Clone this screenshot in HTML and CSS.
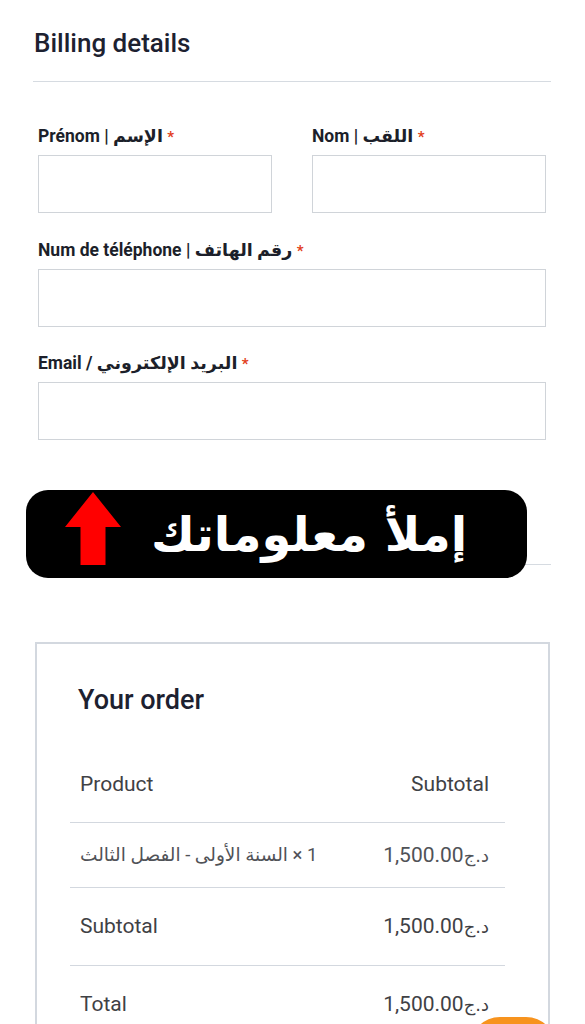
FILE: index.html
```html
<!DOCTYPE html>
<html lang="fr">
  <head>
    <meta charset="UTF-8" />
    <meta name="viewport" content="width=device-width, initial-scale=1.0" />
    <title>Checkout</title>
    <link rel="stylesheet" href="styles.css">
  </head>
  <body>
    <div class="page">
      <h2 class="title">Billing details</h2>
      <hr class="rule" />

      <div class="row two">
        <div class="field">
          <label>Prénom | الإسم <span class="req">*</span></label>
          <input type="text" />
        </div>
        <div class="field">
          <label>Nom | اللقب <span class="req">*</span></label>
          <input type="text" />
        </div>
      </div>
      <div class="field">
        <label>Num de téléphone | رقم الهاتف <span class="req">*</span></label>
        <input type="tel" />
      </div>
      <div class="field">
        <label>Email / البريد الإلكتروني <span class="req">*</span></label>
        <input type="email" />
      </div>

      <hr class="rule lower" />

      <div class="order">
        <h3>Your order</h3>
        <table class="order_table">
          <tr class="head">
            <td>Product</td>
            <td class="num">Subtotal</td>
          </tr>
          <tr class="item">
            <td><span dir="rtl">السنة الأولى - الفصل الثالث</span> × 1</td>
            <td class="num">1,500.00<span class="cur">د.ج</span></td>
          </tr>
          <tr class="sub">
            <td>Subtotal</td>
            <td class="num">1,500.00<span class="cur">د.ج</span></td>
          </tr>
          <tr class="total">
            <td>Total</td>
            <td class="num">1,500.00<span class="cur">د.ج</span></td>
          </tr>
        </table>
      </div>
    </div>

    <!-- sticker over the form -->
    <div class="banner">
      <svg class="arrow" width="56" height="73" viewBox="0 0 56 73">
        <polygon points="28,0 56,35 40.5,35 40.5,73 15.5,73 15.5,35 0,35" fill="#ff0000" />
      </svg>
      <span class="banner_text" dir="rtl">إملأ معلوماتك</span>
    </div>

    <div class="chat_btn"></div>
  </body>
</html>
```

FILE: styles.css
```css
* {
  box-sizing: border-box;
}
body {
  margin: 0;
  font-family: Roboto, "DejaVu Sans", sans-serif;
  background: #ffffff;
  color: #1c1f2a;
  overflow: hidden;
}
.page {
  padding: 25px 34px 0 33px;
}
.title {
  margin: 0 0 0 1px;
  font-size: 26px;
  font-weight: 500;
  line-height: 36px;
  color: #1d2130;
}
.rule {
  border: 0;
  border-top: 1px solid #d6dbe1;
  margin: 20px 0 0;
}
.rule.lower {
  margin-top: 124px;
}
.row.two {
  display: flex;
  gap: 40px;
}
.row.two .field {
  flex: 1;
}
.field {
  padding-left: 5px;
  padding-right: 5px;
}
.row.two .field + .field {
  padding-left: 0;
}
.row.two .field:first-child {
  padding-right: 0;
}
label {
  display: block;
  font-family: Roboto, "DejaVu Sans", sans-serif;
  font-size: 17.5px;
  font-weight: 700;
  line-height: 22px;
  color: #1c1f2a;
}
.field + .field label {
  margin-top: 25px;
}
.row.two .field label {
  margin-top: 43px;
}
.row.two + .field label {
  margin-top: 26px;
}
.req {
  color: #e2401c;
  font-size: 15px;
}
input {
  display: block;
  width: 100%;
  height: 58px;
  margin-top: 7px;
  border: 1px solid #d0d4d9;
  background: #ffffff;
}
.order {
  margin: 77px 1px 0 2px;
  border: 2px solid #d3d8df;
  border-bottom: 0;
  padding: 38px 43px 0 33px;
  height: 420px;
}
.order h3 {
  margin: 0 0 0 8px;
  font-size: 27px;
  font-weight: 500;
  line-height: 36px;
  color: #1d2130;
}
.order_table {
  width: 100%;
  border-collapse: collapse;
  margin-top: 29px;
  font-size: 21px;
  color: #3f4145;
}
.order_table td {
  padding: 0 16px 0 10px;
  border-bottom: 1px solid #d3d8df;
}
.order_table .num {
  text-align: right;
}
.head td {
  height: 75px;
}
.item td {
  height: 65px;
  color: #505257;
}
.item td:first-child {
  font-size: 18.5px;
}
.sub td {
  height: 78px;
}
.total td {
  height: 78px;
  border-bottom: 0;
}
.cur {
  font-family: "DejaVu Sans", sans-serif;
  font-size: 18px;
}
.banner {
  position: absolute;
  left: 26px;
  top: 490px;
  width: 501px;
  height: 88px;
  background: #000000;
  border-radius: 22px;
  display: flex;
  align-items: center;
  padding-left: 39px;
}
.arrow {
  align-self: flex-start;
  margin-top: 2px;
}
.banner_text {
  margin-left: 30px;
  color: #ffffff;
  font-family: "DejaVu Sans", sans-serif;
  font-size: 48px;
  font-weight: 700;
  line-height: 1;
}
.chat_btn {
  position: absolute;
  left: 470px;
  top: 1017px;
  width: 86px;
  height: 60px;
  border-radius: 30px;
  background: #f7931e;
}
```
